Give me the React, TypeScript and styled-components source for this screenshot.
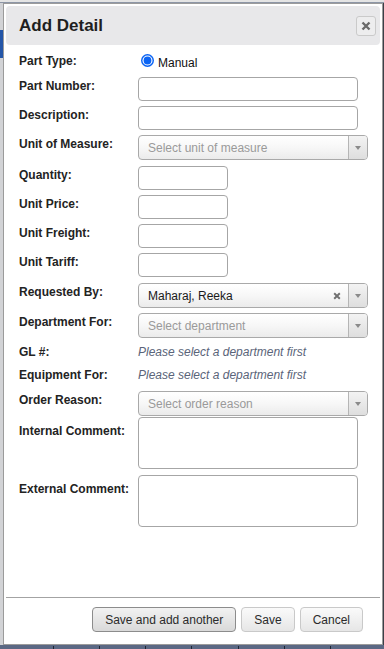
import React from 'react';
import styled, { createGlobalStyle } from 'styled-components';

const Global = createGlobalStyle`
  html, body { margin: 0; padding: 0; }
  body {
    width: 384px;
    height: 649px;
    overflow: hidden;
    background: #c8ccd3;
    font-family: "Liberation Sans", Arial, Helvetica, sans-serif;
  }
  * { box-sizing: border-box; }
`;

const Page = styled.div`
  position: relative;
  width: 384px;
  height: 649px;
  display: flex;
  flex-direction: column;
  background: #d5d7db;
`;

const TopBar = styled.div`
  height: 3px;
  background: #e4e4e4;
  border-bottom: 1px solid #8d96a6;
`;

const PageBody = styled.div`
  flex: 1;
  display: flex;
`;

const SideStrip = styled.div`
  width: 3px;
  display: flex;
  flex-direction: column;
  background: #d2d3d6;
`;

const SideTab = styled.div`
  margin-top: 27px;
  height: 28px;
  background: #2456a8;
`;

const PageMain = styled.div`
  flex: 1;
  border-right: 1px solid #3b3f47;
`;

const BottomBand = styled.div`
  height: 4px;
  background: #5b6884;
  display: flex;
  justify-content: space-around;
  padding: 0 30px;
`;

const Tick = styled.span`
  width: 1px;
  height: 3px;
  margin-top: 1px;
  background: #1e2533;
`;

const Dialog = styled.div`
  position: absolute;
  left: 3px;
  top: 3px;
  width: 380px;
  height: 642px;
  border: 1px solid #9b9b9b;
  background: #fff;
  padding: 2px;
  display: flex;
  flex-direction: column;
`;

const TitleBar = styled.div`
  height: 39px;
  background: #e8e8ea;
  border-radius: 4px;
  display: flex;
  align-items: center;
  justify-content: space-between;
  padding: 0 4px 0 13px;
`;

const Title = styled.span`
  font-size: 17px;
  font-weight: bold;
  color: #1f1f1f;
`;

const CloseButton = styled.button`
  width: 20px;
  height: 20px;
  padding: 0;
  border: 1px solid #cacaca;
  border-radius: 3px;
  background: #ededee;
  display: flex;
  align-items: center;
  justify-content: center;
`;

const Content = styled.div`
  flex: 1;
  padding: 9px 13px 0 13px;
  display: flex;
  flex-direction: column;
`;

const Row = styled.div<{ $mb?: number; $minH?: number }>`
  display: grid;
  grid-template-columns: 119px 1fr;
  align-items: start;
  margin-bottom: ${(p) => (p.$mb ?? 5)}px;
  min-height: ${(p) => (p.$minH ?? 0)}px;
`;

const Label = styled.label<{ $pt?: number }>`
  font-size: 12px;
  line-height: 14px;
  font-weight: bold;
  color: #232323;
  padding-top: ${(p) => (p.$pt ?? 2)}px;
`;

const RadioGroup = styled.div`
  display: flex;
  align-items: flex-start;
  padding-left: 3px;
  gap: 4px;
`;

const RadioText = styled.span`
  font-size: 12px;
  line-height: 14px;
  color: #111;
  margin-top: 2px;
`;

const TextInput = styled.input<{ $small?: boolean }>`
  display: block;
  width: ${(p) => (p.$small ? 90 : 220)}px;
  height: 24px;
  margin: 0;
  border: 1px solid #a6a6a6;
  border-radius: 4px;
  background: #fff;
  font: 12px "Liberation Sans", Arial, sans-serif;
  padding: 0 6px;
  outline: none;
`;

const TextArea = styled.textarea`
  display: block;
  width: 220px;
  height: 52px;
  margin: 0;
  border: 1px solid #a6a6a6;
  border-radius: 4px;
  background: #fff;
  resize: none;
  font: 12px "Liberation Sans", Arial, sans-serif;
  outline: none;
`;

const SelectBox = styled.div`
  width: 230px;
  height: 25px;
  display: flex;
  align-items: stretch;
  border: 1px solid #a9a9a9;
  border-radius: 4px;
  background: linear-gradient(#ffffff 0%, #f7f7f7 50%, #ebebeb 100%);
  overflow: hidden;
`;

const SelectText = styled.span<{ $placeholder?: boolean }>`
  flex: 1;
  display: flex;
  align-items: center;
  padding: 1px 0 0 9px;
  font-size: 12px;
  color: ${(p) => (p.$placeholder ? '#9a9a9a' : '#1a1a1a')};
`;

const ClearIcon = styled.span`
  width: 22px;
  display: flex;
  align-items: center;
  justify-content: center;
`;

const ArrowBox = styled.span`
  width: 19px;
  border-left: 1px solid #b5b5b5;
  background: linear-gradient(#f3f3f3, #dedede);
  display: flex;
  align-items: center;
  justify-content: center;
`;

const Caret = styled.span`
  width: 0;
  height: 0;
  border-left: 3px solid transparent;
  border-right: 3px solid transparent;
  border-top: 4px solid #8a8a8a;
  margin-top: 1px;
`;

const Hint = styled.span`
  font-size: 12px;
  line-height: 14px;
  font-style: italic;
  color: #5a6479;
  padding-top: 1px;
`;

const ButtonPane = styled.div`
  border-top: 1px solid #a3a3a3;
  padding: 9px 17px 10px 0;
  display: flex;
  justify-content: flex-end;
  gap: 5px;
`;

const Button = styled.button<{ $primary?: boolean }>`
  height: 25px;
  padding: 0 12px;
  font: 12px "Liberation Sans", Arial, sans-serif;
  color: #2b2b2b;
  border: 1px solid ${(p) => (p.$primary ? '#8c8c8c' : '#c9c9c9')};
  border-radius: 4px;
  background: ${(p) =>
    p.$primary
      ? 'linear-gradient(#f2f2f2, #d9d9d9)'
      : 'linear-gradient(#fafafa, #e6e6e6)'};
`;

const XIcon = ({ size, color }: { size: number; color: string }) => (
  <svg width={size} height={size} viewBox="0 0 10 10">
    <path d="M1.5 1.5 L8.5 8.5 M8.5 1.5 L1.5 8.5" stroke={color} strokeWidth={2.4} strokeLinecap="butt" />
  </svg>
);

const RadioIcon = () => (
  <svg width={13} height={13} viewBox="0 0 13 13">
    <circle cx={6.5} cy={6.5} r={6.5} fill="#0b64f4" />
    <circle cx={6.5} cy={6.5} r={5} fill="#ffffff" />
    <circle cx={6.5} cy={6.5} r={3.9} fill="#0b64f4" />
  </svg>
);

const Select = ({ text, placeholder, clearable }: { text: string; placeholder?: boolean; clearable?: boolean }) => (
  <SelectBox>
    <SelectText $placeholder={placeholder}>{text}</SelectText>
    {clearable && (
      <ClearIcon>
        <XIcon size={8} color="#707070" />
      </ClearIcon>
    )}
    <ArrowBox>
      <Caret />
    </ArrowBox>
  </SelectBox>
);

export default function App() {
  return (
    <>
      <Global />
      <Page>
        <TopBar />
        <PageBody>
          <SideStrip>
            <SideTab />
          </SideStrip>
          <PageMain />
        </PageBody>
        <BottomBand>
          {Array.from({ length: 7 }).map((_, i) => (
            <Tick key={i} />
          ))}
        </BottomBand>

        <Dialog>
          <TitleBar>
            <Title>Add Detail</Title>
            <CloseButton aria-label="close">
              <XIcon size={10} color="#6a6a6a" />
            </CloseButton>
          </TitleBar>
          <Content>
            <Row $minH={18}>
              <Label $pt={0}>Part Type:</Label>
              <RadioGroup>
                <RadioIcon />
                <RadioText>Manual</RadioText>
              </RadioGroup>
            </Row>
            <Row>
              <Label>Part Number:</Label>
              <TextInput />
            </Row>
            <Row>
              <Label>Description:</Label>
              <TextInput />
            </Row>
            <Row $mb={6}>
              <Label>Unit of Measure:</Label>
              <Select text="Select unit of measure" placeholder />
            </Row>
            <Row>
              <Label>Quantity:</Label>
              <TextInput $small />
            </Row>
            <Row>
              <Label>Unit Price:</Label>
              <TextInput $small />
            </Row>
            <Row>
              <Label>Unit Freight:</Label>
              <TextInput $small />
            </Row>
            <Row $mb={6}>
              <Label>Unit Tariff:</Label>
              <TextInput $small />
            </Row>
            <Row>
              <Label>Requested By:</Label>
              <Select text="Maharaj, Reeka" clearable />
            </Row>
            <Row $mb={6}>
              <Label>Department For:</Label>
              <Select text="Select department" placeholder />
            </Row>
            <Row $minH={18}>
              <Label $pt={1}>GL #:</Label>
              <Hint>Please select a department first</Hint>
            </Row>
            <Row $minH={18} $mb={6}>
              <Label $pt={1}>Equipment For:</Label>
              <Hint>Please select a department first</Hint>
            </Row>
            <Row $mb={1}>
              <Label>Order Reason:</Label>
              <Select text="Select order reason" placeholder />
            </Row>
            <Row $mb={6}>
              <Label $pt={7}>Internal Comment:</Label>
              <TextArea />
            </Row>
            <Row>
              <Label $pt={7}>External Comment:</Label>
              <TextArea />
            </Row>
          </Content>
          <ButtonPane>
            <Button $primary>Save and add another</Button>
            <Button>Save</Button>
            <Button>Cancel</Button>
          </ButtonPane>
        </Dialog>
      </Page>
    </>
  );
}
